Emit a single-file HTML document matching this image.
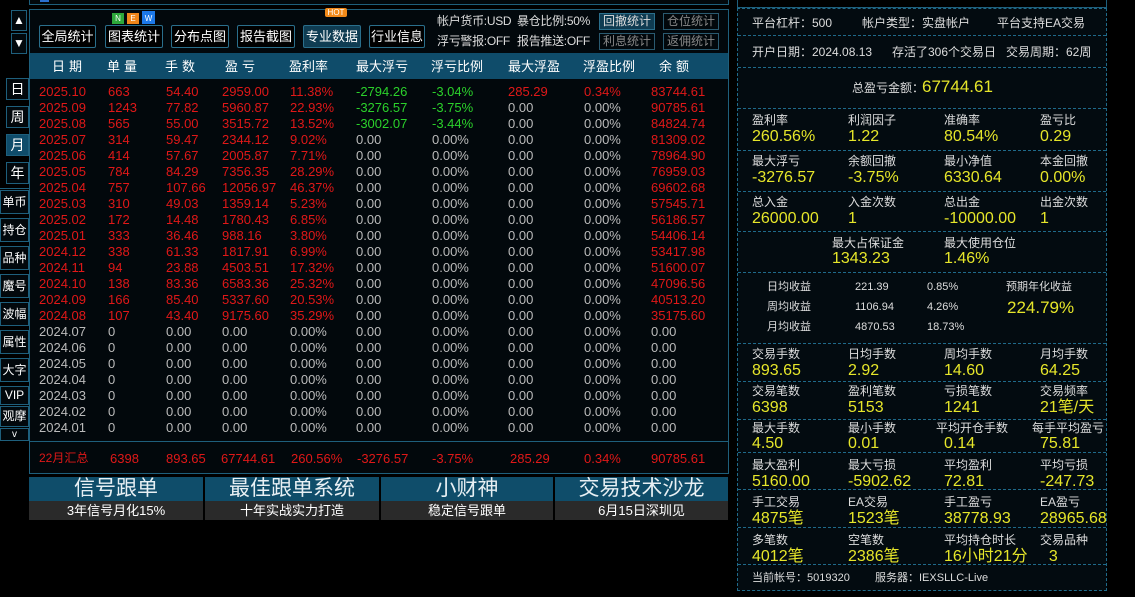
<!DOCTYPE html>
<html><head><meta charset="utf-8"><style>
*{margin:0;padding:0;box-sizing:border-box}
body{width:1135px;height:597px;background:#000;position:relative;overflow:hidden;font-family:"Liberation Sans","Noto Sans CJK SC",sans-serif;color:#ddd}
.a{position:absolute;white-space:nowrap}
.sb{position:absolute;border:1px solid #1e5f7c;color:#fff;font-size:12px;text-align:center;background:#02080c}
.btn{position:absolute;top:25px;height:23px;border:1px solid #2a6f8c;color:#fff;font-size:13px;line-height:21px;text-align:center;background:#000;border-radius:2px}
.sbtn{position:absolute;height:17px;border:1px solid #2a5a70;font-size:12px;line-height:15px;text-align:center;color:#888}
.r{color:#e01818}.g{color:#2bd12b}.w{color:#bbb}
.tbl div{position:absolute;font-size:13px;white-space:nowrap;line-height:15px}
.rp{position:absolute;left:737px;width:370px;border:1px dashed #1f6a8a;border-top:none;background:#030b10}
.lb{position:absolute;font-size:12px;color:#ddd;white-space:nowrap;line-height:14px}
.vl{position:absolute;font-size:16px;color:#e6e62a;white-space:nowrap;line-height:18px}
.bn{position:absolute;top:477px;height:43px}
.bn .t{height:24px;background:#0f4d6a;color:#e8f0f4;font-size:21px;text-align:center;line-height:24px}
.bn .s{height:19px;background:#2a2a2a;color:#fff;font-size:13px;text-align:center;line-height:19px}
.inf{position:absolute;font-size:12px;color:#ddd;line-height:14px;white-space:nowrap;letter-spacing:-0.3px}
</style></head><body>
<div class="a" style="left:29px;top:-2px;width:700px;height:7px;border:1px solid #1e5f7c;background:#02080c"></div>
<div class="a" style="left:40px;top:0;width:9px;height:2px;background:#2a6fd0"></div>
<div class="sb" style="left:11px;top:10px;width:16px;height:21px;line-height:19px">▲</div>
<div class="sb" style="left:11px;top:33px;width:16px;height:21px;line-height:19px">▼</div>
<div class="sb" style="left:6px;top:78px;width:23px;height:22px;line-height:20px;font-size:14px">日</div>
<div class="sb" style="left:6px;top:106px;width:23px;height:22px;line-height:20px;font-size:14px">周</div>
<div class="sb" style="left:6px;top:134px;width:23px;height:22px;line-height:20px;font-size:14px;background:#0f4c6a">月</div>
<div class="sb" style="left:6px;top:162px;width:23px;height:22px;line-height:20px;font-size:14px">年</div>
<div class="a" style="left:0;top:188px;width:29px;border-top:1px solid #1e5f7c"></div>
<div class="sb" style="left:0;top:190px;width:29px;height:24px;line-height:22px">单币</div>
<div class="sb" style="left:0;top:218px;width:29px;height:24px;line-height:22px">持仓</div>
<div class="sb" style="left:0;top:246px;width:29px;height:24px;line-height:22px">品种</div>
<div class="sb" style="left:0;top:274px;width:29px;height:24px;line-height:22px">魔号</div>
<div class="sb" style="left:0;top:302px;width:29px;height:24px;line-height:22px">波幅</div>
<div class="sb" style="left:0;top:330px;width:29px;height:24px;line-height:22px">属性</div>
<div class="sb" style="left:0;top:358px;width:29px;height:24px;line-height:22px">大字</div>
<div class="sb" style="left:0;top:386px;width:29px;height:19px;line-height:17px">VIP</div>
<div class="sb" style="left:0;top:406px;width:29px;height:21px;line-height:19px">观摩</div>
<div class="sb" style="left:0;top:428px;width:29px;height:13px;line-height:11px;font-size:10px">v</div>
<div class="a" style="left:29px;top:9px;width:700px;height:465px;border:1px solid #1e5f7c;background:#02080c"></div>
<div class="btn" style="left:39px;width:57px">全局统计</div>
<div class="btn" style="left:105px;width:58px">图表统计</div>
<div class="btn" style="left:171px;width:58px">分布点图</div>
<div class="btn" style="left:237px;width:58px">报告截图</div>
<div class="btn" style="left:303px;width:58px;background:#0f3c52">专业数据</div>
<div class="btn" style="left:369px;width:56px">行业信息</div>
<div class="a" style="left:112px;top:13px;width:12px;height:11px;background:#2da83a;color:#fff;font-size:8px;text-align:center;line-height:11px">N</div>
<div class="a" style="left:127px;top:13px;width:12px;height:11px;background:#f0861a;color:#fff;font-size:8px;text-align:center;line-height:11px">E</div>
<div class="a" style="left:142px;top:11px;width:13px;height:13px;background:#1c78e8;color:#fff;font-size:8px;text-align:center;line-height:15px">W</div>
<div class="a" style="left:325px;top:8px;width:22px;height:9px;background:#f28a1a;color:#fff;font-size:8px;text-align:center;line-height:9px;border-radius:2px">HOT</div>
<div class="inf" style="left:437px;top:14px">帐户货币:USD</div>
<div class="inf" style="left:517px;top:14px">暴仓比例:50%</div>
<div class="inf" style="left:437px;top:34px">浮亏警报:OFF</div>
<div class="inf" style="left:517px;top:34px">报告推送:OFF</div>
<div class="sbtn" style="left:599px;top:13px;width:56px;color:#ddd;background:#0f3c52;border-color:#2a6f8c">回撤统计</div>
<div class="sbtn" style="left:663px;top:13px;width:56px">仓位统计</div>
<div class="sbtn" style="left:599px;top:33px;width:56px">利息统计</div>
<div class="sbtn" style="left:663px;top:33px;width:56px">返佣统计</div>
<div class="a" style="left:30px;top:53px;width:698px;height:26px;background:#0f4c6a"></div>
<div class="tbl" style="color:#fff">
<div style="left:52px;top:59px;letter-spacing:4px">日期</div><div style="left:107px;top:59px;letter-spacing:4px">单量</div><div style="left:165px;top:59px;letter-spacing:4px">手数</div><div style="left:225px;top:59px;letter-spacing:4px">盈亏</div><div style="left:289px;top:59px">盈利率</div><div style="left:356px;top:59px">最大浮亏</div><div style="left:431px;top:59px">浮亏比例</div><div style="left:508px;top:59px">最大浮盈</div><div style="left:583px;top:59px">浮盈比例</div><div style="left:659px;top:59px;letter-spacing:4px">余额</div>
</div>
<div class="tbl" id="t"></div>
<div class="a" style="left:30px;top:441px;width:698px;border-top:1px solid #1e5f7c"></div>
<div class="tbl r">
<div style="left:39px;top:451px;font-size:12px">22月汇总</div><div style="left:110px;top:451px">6398</div><div style="left:166px;top:451px">893.65</div><div style="left:221px;top:451px">67744.61</div><div style="left:291px;top:451px">260.56%</div><div style="left:357px;top:451px">-3276.57</div><div style="left:432px;top:451px">-3.75%</div><div style="left:510px;top:451px">285.29</div><div style="left:584px;top:451px">0.34%</div><div style="left:651px;top:451px">90785.61</div>
</div>
<div class="bn" style="left:29px;width:174px"><div class="t">信号跟单</div><div class="s">3年信号月化15%</div></div>
<div class="bn" style="left:205px;width:174px"><div class="t">最佳跟单系统</div><div class="s">十年实战实力打造</div></div>
<div class="bn" style="left:381px;width:172px"><div class="t">小财神</div><div class="s">稳定信号跟单</div></div>
<div class="bn" style="left:555px;width:173px"><div class="t">交易技术沙龙</div><div class="s">6月15日深圳见</div></div>
<div class="a" style="left:737px;top:0;width:370px;height:8px;border:1px solid #1e5f7c;border-top:none"></div>
<div class="rp" style="top:8px;height:583px;border-top:1px dashed #1f6a8a"></div>
<div id="rp"></div>
<script>
var rows=[
["2025.10","663","54.40","2959.00","11.38%","-2794.26","-3.04%","285.29","0.34%","83744.61",1],
["2025.09","1243","77.82","5960.87","22.93%","-3276.57","-3.75%","0.00","0.00%","90785.61",1],
["2025.08","565","55.00","3515.72","13.52%","-3002.07","-3.44%","0.00","0.00%","84824.74",1],
["2025.07","314","59.47","2344.12","9.02%","0.00","0.00%","0.00","0.00%","81309.02",0],
["2025.06","414","57.67","2005.87","7.71%","0.00","0.00%","0.00","0.00%","78964.90",0],
["2025.05","784","84.29","7356.35","28.29%","0.00","0.00%","0.00","0.00%","76959.03",0],
["2025.04","757","107.66","12056.97","46.37%","0.00","0.00%","0.00","0.00%","69602.68",0],
["2025.03","310","49.03","1359.14","5.23%","0.00","0.00%","0.00","0.00%","57545.71",0],
["2025.02","172","14.48","1780.43","6.85%","0.00","0.00%","0.00","0.00%","56186.57",0],
["2025.01","333","36.46","988.16","3.80%","0.00","0.00%","0.00","0.00%","54406.14",0],
["2024.12","338","61.33","1817.91","6.99%","0.00","0.00%","0.00","0.00%","53417.98",0],
["2024.11","94","23.88","4503.51","17.32%","0.00","0.00%","0.00","0.00%","51600.07",0],
["2024.10","138","83.36","6583.36","25.32%","0.00","0.00%","0.00","0.00%","47096.56",0],
["2024.09","166","85.40","5337.60","20.53%","0.00","0.00%","0.00","0.00%","40513.20",0],
["2024.08","107","43.40","9175.60","35.29%","0.00","0.00%","0.00","0.00%","35175.60",0]];
["2024.07","2024.06","2024.05","2024.04","2024.03","2024.02","2024.01"].forEach(function(d){rows.push([d,"0","0.00","0.00","0.00%","0.00","0.00%","0.00","0.00%","0.00",2])});
var xs=[39,108,166,222,290,356,432,508,584,651],h="";
rows.forEach(function(r,i){var y=84+i*16;var red=r[10]!=2;
for(var c=0;c<10;c++){var cl=red?"r":"w";if(c>=5&&c<=6)cl=(r[10]==1)?"g":"w";if(c>=7&&c<=8)cl=(i==0)?"r":"w";if(c==9&&red)cl="r";
h+='<div class="'+cl+'" style="left:'+xs[c]+'px;top:'+y+'px">'+r[c]+'</div>';}});
document.getElementById("t").innerHTML=h;
var R="";
function L(x,y,t,s){R+='<div class="lb" style="left:'+x+'px;top:'+y+'px'+(s||'')+'">'+t+'</div>';}
function V(x,y,t,s){R+='<div class="vl" style="left:'+x+'px;top:'+y+'px'+(s||'')+'">'+t+'</div>';}
function H(y){R+='<div class="a" style="left:738px;top:'+y+'px;width:368px;border-top:1px dashed #1f6a8a"></div>';}
[35,67,108,150,191,231,272,343,381,419,452,489,527,564].forEach(H);
L(752,16,"平台杠杆：500");L(862,16,"帐户类型：实盘帐户");L(997,16,"平台支持EA交易");
L(752,45,"开户日期：2024.08.13");L(892,45,"存活了306个交易日");L(1006,45,"交易周期：62周");
L(852,81,"总盈亏金额：");V(922,77,"67744.61",";font-size:17px;line-height:20px");
var xs2=[752,848,944,1040];
function G(y,labs,vals){for(var i=0;i<4;i++){L(xs2[i],y,labs[i]);V(xs2[i],y+15,vals[i]);}}
G(113,["盈利率","利润因子","准确率","盈亏比"],["260.56%","1.22","80.54%","0.29"]);
G(154,["最大浮亏","余额回撤","最小净值","本金回撤"],["-3276.57","-3.75%","6330.64","0.00%"]);
G(195,["总入金","入金次数","总出金","出金次数"],["26000.00","1","-10000.00","1"]);
L(832,236,"最大占保证金");V(832,250,"1343.23");L(944,236,"最大使用仓位");V(944,250,"1.46%");
L(767,280,"日均收益",";font-size:11px");L(855,280,"221.39",";font-size:11px");L(927,280,"0.85%",";font-size:11px");
L(767,300,"周均收益",";font-size:11px");L(855,300,"1106.94",";font-size:11px");L(927,300,"4.26%",";font-size:11px");
L(767,320,"月均收益",";font-size:11px");L(855,320,"4870.53",";font-size:11px");L(927,320,"18.73%",";font-size:11px");
L(1006,280,"预期年化收益",";font-size:11px");V(1007,298,"224.79%",";font-size:17px;line-height:20px");
G(347,["交易手数","日均手数","周均手数","月均手数"],["893.65","2.92","14.60","64.25"]);
G(384,["交易笔数","盈利笔数","亏损笔数","交易频率"],["6398","5153","1241","21笔/天"]);
L(752,421,"最大手数");L(848,421,"最小手数");L(936,421,"平均开仓手数");L(1032,421,"每手平均盈亏");
V(752,435,"4.50");V(848,435,"0.01");V(944,435,"0.14");V(1040,435,"75.81");
G(458,["最大盈利","最大亏损","平均盈利","平均亏损"],["5160.00","-5902.62","72.81","-247.73"]);
G(495,["手工交易","EA交易","手工盈亏","EA盈亏"],["4875笔","1523笔","38778.93","28965.68"]);
G(533,["多笔数","空笔数","平均持仓时长","交易品种"],["4012笔","2386笔","16小时21分","&nbsp;&nbsp;3"]);
L(752,571,"当前帐号：5019320",";font-size:11px");L(875,571,"服务器：IEXSLLC-Live",";font-size:11px");
document.getElementById("rp").innerHTML=R;
</script>
</body></html>
